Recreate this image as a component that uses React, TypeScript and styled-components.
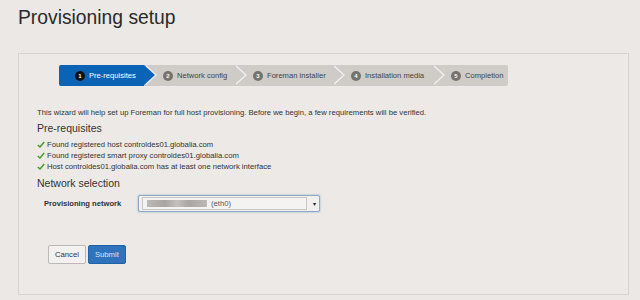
import React from "react";
import styled, { createGlobalStyle } from "styled-components";

const GlobalStyle = createGlobalStyle`
  body {
    margin: 0;
    background: #ebe8e5;
    font-family: "Liberation Sans", Arial, sans-serif;
    color: #333;
  }
`;

const Page = styled.div`
  width: 640px;
  height: 300px;
  box-sizing: border-box;
  padding: 6px 11px 0 18px;
  overflow: hidden;
`;

const Title = styled.h1`
  margin: 0 0 23px;
  font-size: 19.3px;
  font-weight: normal;
  color: #2a2a2a;
  line-height: 24px;
`;

const Panel = styled.div`
  border: 1px solid #d6d3d0;
  background: #ece9e6;
  height: 242px;
  box-sizing: border-box;
  padding: 11px 18px 0 18px;
`;

const Steps = styled.div`
  display: flex;
  margin-left: 22px;
  height: 21px;
`;

const Step = styled.div<{ $active?: boolean; $first?: boolean; $last?: boolean; $w: number }>`
  position: relative;
  display: flex;
  align-items: center;
  gap: 4px;
  height: 21px;
  padding-left: ${(p) => (p.$first ? "16px" : "19px")};
  width: ${(p) => p.$w}px;
  box-sizing: border-box;
  background: ${(p) => (p.$active ? "#0b63b6" : "#cfcbc7")};
  color: ${(p) => (p.$active ? "#fff" : "#444")};
  font-size: 7.6px;
  border-radius: ${(p) => (p.$first ? "2px 0 0 2px" : p.$last ? "0 2px 2px 0" : "0")};
  ${(p) =>
    !p.$last &&
    `
    &::after {
      content: "";
      position: absolute;
      right: -11px;
      top: 0;
      width: 0;
      height: 0;
      border-top: 10.5px solid transparent;
      border-bottom: 10.5px solid transparent;
      border-left: 11px solid ${p.$active ? "#0b63b6" : "#cfcbc7"};
      z-index: 2;
    }
    &::before {
      content: "";
      position: absolute;
      right: -13px;
      top: 0;
      width: 0;
      height: 0;
      border-top: 10.5px solid transparent;
      border-bottom: 10.5px solid transparent;
      border-left: 11px solid #f2f0ee;
      z-index: 1;
    }
  `}
`;

const Num = styled.span<{ $active?: boolean }>`
  display: inline-flex;
  align-items: center;
  justify-content: center;
  width: 10px;
  height: 10px;
  border-radius: 50%;
  background: ${(p) => (p.$active ? "#111" : "#77726e")};
  color: #fff;
  font-size: 6px;
  font-weight: bold;
`;

const Intro = styled.p`
  margin: 22px 0 0;
  font-size: 7.7px;
  color: #333;
`;

const Heading = styled.h3`
  margin: 5px 0 5px;
  font-size: 10.5px;
  font-weight: normal;
  color: #333;
`;

const CheckList = styled.ul`
  list-style: none;
  margin: 0;
  padding: 0;
`;

const CheckItem = styled.li`
  display: flex;
  align-items: center;
  gap: 2px;
  font-size: 7.7px;
  height: 11px;
  color: #333;
`;

const FormRow = styled.div`
  display: flex;
  align-items: center;
  margin: 6px 0 0 7px;
`;

const Label = styled.label`
  width: 94px;
  font-size: 7.6px;
  font-weight: bold;
  color: #333;
`;

const Select = styled.div`
  display: flex;
  align-items: center;
  width: 182px;
  height: 17px;
  box-sizing: border-box;
  border: 1px solid #8ea8c6;
  border-radius: 2px;
  box-shadow: 0 0 2px #7aa6d6;
  background: #f2f0ee;
  font-size: 7.7px;
  color: #555;
`;

const SelectField = styled.div`
  flex: 1;
  display: flex;
  align-items: center;
  gap: 4px;
  height: 11px;
  margin: 0 3px;
  border: 1px solid #c8c5c2;
  background: #f5f3f1;
  padding-left: 4px;
`;

const Blur = styled.span`
  width: 60px;
  height: 7px;
  background: linear-gradient(90deg, #bdb9b6, #a9a5a2 30%, #c4c0bd 50%, #aaa6a3 70%, #bcb8b5);
`;

const Caret = styled.span`
  width: 9px;
  display: flex;
  justify-content: center;
  font-size: 6px;
  color: #222;
`;

const Buttons = styled.div`
  display: flex;
  gap: 2px;
  margin: 33px 0 0 11px;
`;

const Button = styled.button<{ $primary?: boolean }>`
  height: 19px;
  padding: 0 6px;
  font-family: inherit;
  font-size: 7.7px;
  border-radius: 2px;
  border: 1px solid ${(p) => (p.$primary ? "#1f62a8" : "#bcb8b5")};
  background: ${(p) => (p.$primary ? "#2e73bb" : "#f3f1ef")};
  color: ${(p) => (p.$primary ? "#d8e6f4" : "#333")};
`;

const Check = () => (
  <svg width="8" height="7" viewBox="0 0 8 7">
    <path d="M0.8 4 L3 6 L7.2 1" fill="none" stroke="#4a9a2c" strokeWidth="1.5" />
  </svg>
);

const steps = [
  { label: "Pre-requisites", w: 85 },
  { label: "Network config", w: 90 },
  { label: "Foreman installer", w: 98 },
  { label: "Installation media", w: 100 },
  { label: "Completion", w: 76 },
];

const App = () => {
  return (
    <Page>
      <GlobalStyle />
      <Title>Provisioning setup</Title>
      <Panel>
        <Steps>
          {steps.map((s, i) => (
            <Step
              key={s.label}
              $w={s.w}
              $active={i === 0}
              $first={i === 0}
              $last={i === steps.length - 1}
            >
              <Num $active={i === 0}>{i + 1}</Num>
              {s.label}
            </Step>
          ))}
        </Steps>
        <Intro>
          This wizard will help set up Foreman for full host provisioning. Before we begin, a few
          requirements will be verified.
        </Intro>
        <Heading>Pre-requisites</Heading>
        <CheckList>
          <CheckItem>
            <Check />
            Found registered host controldes01.globalia.com
          </CheckItem>
          <CheckItem>
            <Check />
            Found registered smart proxy controldes01.globalia.com
          </CheckItem>
          <CheckItem>
            <Check />
            Host controldes01.globalia.com has at least one network interface
          </CheckItem>
        </CheckList>
        <Heading>Network selection</Heading>
        <FormRow>
          <Label>Provisioning network</Label>
          <Select>
            <SelectField>
              <Blur />
              (eth0)
            </SelectField>
            <Caret>▾</Caret>
          </Select>
        </FormRow>
        <Buttons>
          <Button>Cancel</Button>
          <Button $primary>Submit</Button>
        </Buttons>
      </Panel>
    </Page>
  );
};

export default App;
